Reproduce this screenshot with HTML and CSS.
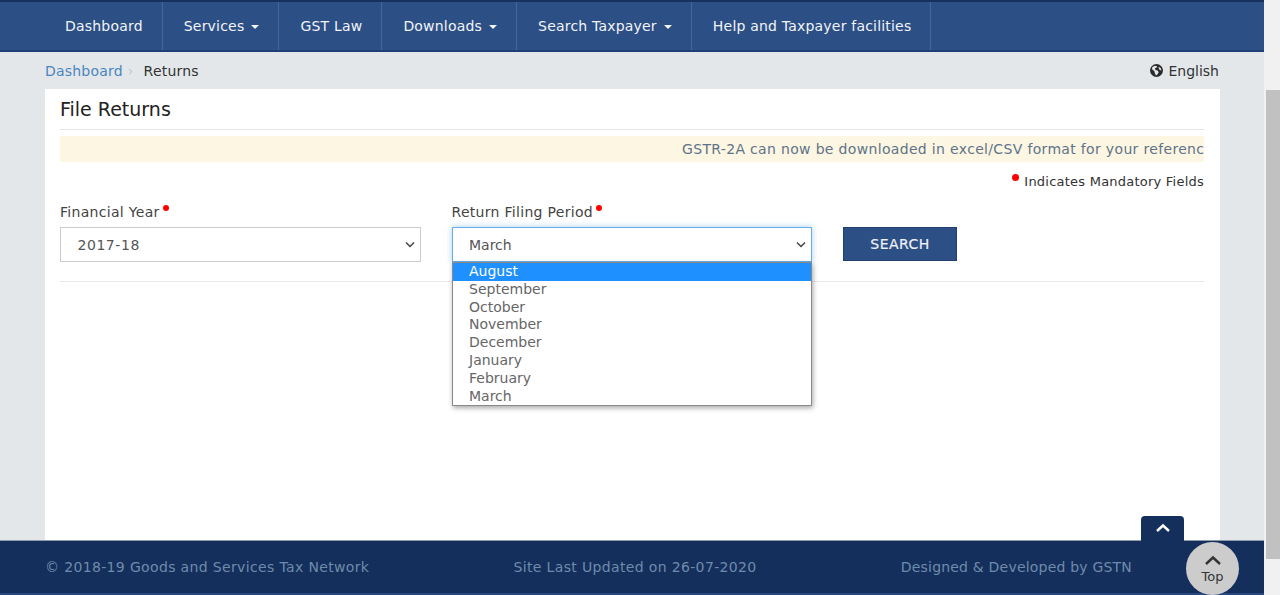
FILE: index.html
```html
<!doctype html>
<html lang="en">
<head>
  <meta charset="UTF-8">
  <title>File Returns</title>
  <link rel="stylesheet" href="styles.css">
</head>
<body>
  <div class="page">
    <ul class="nav">
      <li>Dashboard</li>
      <li>Services <i class="caret"></i></li>
      <li>GST Law</li>
      <li>Downloads <i class="caret"></i></li>
      <li>Search Taxpayer <i class="caret"></i></li>
      <li>Help and Taxpayer facilities</li>
    </ul>
    <div class="crumbs">
      <div><a class="crumb-link">Dashboard</a><span class="crumb-sep">&rsaquo;</span><span>Returns</span></div>
      <div class="lang">
        <svg class="globe" width="13" height="13" viewBox="0 0 24 24"><circle cx="12" cy="12" r="12" fill="#2b2b2b"/><path d="M4 6l5-3 4 1-1 3-3 1 1 3 4 1 2 3-2 4-3 2-2-4-1-4-4-3zM16 5l4 3 1 4-3-1-2-3z" fill="#e4e7ea"/></svg>
        English
      </div>
    </div>
    <div class="card">
      <h1 class="title">File Returns</h1>
      <div class="notice"><span>GSTR-2A can now be downloaded in excel/CSV format for your reference</span></div>
      <p class="mandatory"><i class="dot"></i>Indicates Mandatory Fields</p>
      <div class="form-row">
        <div class="field">
          <label class="lbl">Financial Year<i class="dot dot-lbl"></i></label>
          <select class="ctl ctl-year"><option>2017-18</option></select>
        </div>
        <div class="field">
          <label class="lbl">Return Filing Period<i class="dot dot-lbl"></i></label>
          <select class="ctl ctl-focus"><option>March</option></select>
          <ul class="dropdown">
            <li class="sel">August</li>
            <li>September</li>
            <li>October</li>
            <li>November</li>
            <li>December</li>
            <li>January</li>
            <li>February</li>
            <li>March</li>
          </ul>
        </div>
        <button class="btn">SEARCH</button>
      </div>
    </div>
    <div class="footer">
      <span>&copy; 2018-19 Goods and Services Tax Network</span>
      <span>Site Last Updated on 26-07-2020</span>
      <span class="credit">Designed &amp; Developed by GSTN</span>
      <div class="up-tab">
        <svg width="16" height="10" viewBox="0 0 16 10"><path d="M2 8l6-5.5L14 8" fill="none" stroke="#fff" stroke-width="2.4"/></svg>
      </div>
      <div class="top-btn">
        <svg width="18" height="10" viewBox="0 0 18 10"><path d="M2 9l7-6.500 7 6.500" fill="none" stroke="#333" stroke-width="2.400"/></svg>
        <span>Top</span>
      </div>
    </div>
  </div>
  <div class="scrollbar"><div class="thumb"></div></div>
</body>
</html>
```
FILE: styles.css
```css
*{margin:0;
  padding:0;
  box-sizing:border-box;
  list-style:none;}
html,body{height:595px;overflow:hidden;}
body{display:flex;
     background:#f1f1f1;
     font-family:"DejaVu Sans",sans-serif;
     font-size:14px;
     color:#333;}
.page{width:1264px;
      height:595px;
      display:flex;
      flex-direction:column;
      background:#e4e7ea;}

/* top menu */
.nav{display:flex;
     height:52px;
     flex:none;
     background:#2c4f85;
     border-top:2px solid #16305f;
     border-bottom:2px solid #1f3f75;
     padding-left:44px;}
.nav li{display:flex;
        align-items:center;
        gap:7px;
        padding:0 19px 0 21px;
        color:#f2f4f8;
        font-size:14px;
        letter-spacing:.2px;
        border-right:1px solid #46659a;
        white-space:nowrap;}
.caret{width:0;height:0;
       margin-top:2px;
       border-left:4px solid transparent;
       border-right:4px solid transparent;
       border-top:4px solid #f2f4f8;}

/* breadcrumb */
.crumbs{display:flex;
        justify-content:space-between;
        align-items:center;
        height:37px;
        flex:none;
        padding:0 45px 0 45px;
        font-size:14px;
        letter-spacing:.2px;
        color:#333;}
.crumb-link{color:#4a86bd;}
.crumb-sep{color:#c3c7cb;margin:0 10px 0 5px;}
.lang{display:flex;align-items:center;gap:5px;letter-spacing:0;}

/* card */
.card{flex:1;
      margin:0 44px 0 45px;
      padding:0 16px 0 15px;
      background:#fff;}
.title{height:41px;
       font-size:19px;
       font-weight:normal;
       line-height:41px;
       color:#222;
       border-bottom:1px solid #e6e6e6;}
.notice{margin-top:6px;
        height:26px;
        line-height:26px;
        background:#fcf6e3;
        color:#5f7488;
        font-size:14px;
        letter-spacing:.33px;
        padding-left:622px;
        white-space:nowrap;
        overflow:hidden;}
.mandatory{margin-top:10px;
           height:20px;
           line-height:20px;
           text-align:right;
           font-size:13px;
           letter-spacing:.23px;
           color:#333;}
.dot{display:inline-block;
     width:7px;height:7px;
     border-radius:50%;
     background:#f00;
     margin-right:5px;
     vertical-align:5px;}
.dot-lbl{width:6px;height:6px;margin:0 0 0 3px;vertical-align:6px;}
.form-row{display:flex;
          align-items:flex-start;
          margin-top:10px;
          padding-bottom:20px;
          height:80px;
          border-bottom:1px solid #e8e8e8;}
.field{width:360.500px;margin-right:31px;position:relative;}
.lbl{display:block;
     height:25px;
     line-height:20px;
     font-size:14px;
     letter-spacing:.3px;
     color:#444;}
.ctl{display:block;
     width:100%;
     height:35px;
     padding-left:16.500px;
     appearance:none;
     background:#fff url("data:image/svg+xml,%3Csvg xmlns='http://www.w3.org/2000/svg' width='10' height='7' viewBox='0 0 10 7'%3E%3Cpath d='M1 1.500l4 4 4-4' fill='none' stroke='%23444' stroke-width='1.500'/%3E%3C/svg%3E") no-repeat right 5px center;
     border:1px solid #ccc;
     font-family:"DejaVu Sans",sans-serif;
     font-size:14px;
     color:#555;}
.ctl-year{letter-spacing:.55px;}
.ctl-focus{border-color:#66afe9;
           box-shadow:0 0 6px rgba(102,175,233,.6);}
.btn{margin-top:25px;
     width:114px;
     height:34px;
     background:#2c4f85;
     border:1px solid #1f3f75;
     color:#eef1f6;
     font-family:"DejaVu Sans",sans-serif;
     font-size:14px;
     letter-spacing:.45px;
     -webkit-text-stroke:.2px #eef1f6;}

/* open select list */
.dropdown{position:absolute;
          left:0;
          top:60px;
          width:360px;
          height:144px;
          background:#fff;
          border:1px solid #8a8a8a;
          box-shadow:1px 2px 5px rgba(0,0,0,.35);
          font-size:14px;
          color:#666;}
.dropdown li{height:17.800px;
             line-height:17.800px;
             padding-left:16.500px;}
.dropdown .sel{background:#1e90ff;color:#fff;}

/* footer */
.footer{position:relative;
        display:flex;
        justify-content:space-between;
        align-items:center;
        height:55px;
        flex:none;
        padding:0 132px 0 45px;
        background:#142f5c;
        border-top:1px solid #8d99ad;
        border-bottom:2px solid #24477f;
        color:#6f8bab;
        font-size:14px;
        letter-spacing:.35px;}
.credit{letter-spacing:.2px;}
.up-tab{position:absolute;
        left:1141px;
        top:-25px;
        width:43px;
        height:25px;
        display:flex;
        justify-content:center;
        padding-top:7px;
        background:#142f5c;
        border-radius:4px 4px 0 0;}
.top-btn{position:absolute;
         left:1186px;
         top:1px;
         width:53px;
         height:53px;
         border-radius:50%;
         background:#ccc;
         display:flex;
         flex-direction:column;
         align-items:center;
         padding-top:13px;
         color:#333;
         font-size:13px;
         letter-spacing:0;
         line-height:15px;}
.top-btn span{margin-top:4px;}

.scrollbar{width:16px;height:595px;padding:90px 0 0 2px;}
.thumb{height:469px;background:#c1c1c1;}
```
